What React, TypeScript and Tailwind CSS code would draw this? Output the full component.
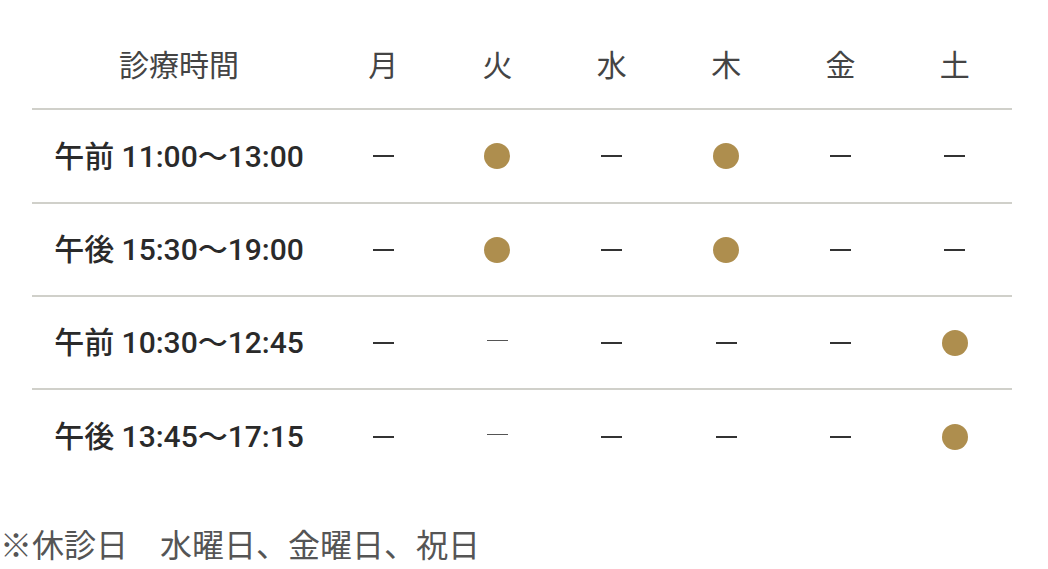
import React from 'react'

type Mark = 'dot' | 'dash' | 'bar'

interface Slot {
  label: string
  days: Mark[]
}

const days = ['月', '火', '水', '木', '金', '土']

// ● = open, — = closed
const slots: Slot[] = [
  { label: '午前 11:00〜13:00', days: ['dash', 'dot', 'dash', 'dot', 'dash', 'dash'] },
  { label: '午後 15:30〜19:00', days: ['dash', 'dot', 'dash', 'dot', 'dash', 'dash'] },
  { label: '午前 10:30〜12:45', days: ['dash', 'bar', 'dash', 'dash', 'dash', 'dot'] },
  { label: '午後 13:45〜17:15', days: ['dash', 'bar', 'dash', 'dash', 'dash', 'dot'] }
]

const Cell: React.FC<{ mark: Mark }> = ({ mark }) => {
  if (mark === 'dot') {
    return <span className="block h-[26px] w-[26px] rounded-full bg-[#ae8e4e]" />
  }
  if (mark === 'bar') {
    return <span className="block h-[1.5px] w-[21px] -translate-y-[2px] bg-[#555]" />
  }
  return <span className="block h-[2px] w-[21px] bg-[#333]" />
}

const App: React.FC = () => {
  return (
    <div
      className="min-h-[569px] bg-white pt-[17px]"
      style={{ fontFamily: 'Roboto, "Noto Sans CJK JP", sans-serif' }}
    >
      <div className="ml-[32px] w-[980px]">
        {/* Header */}
        <div className="grid h-[93px] grid-cols-[294px_repeat(6,1fr)] items-center border-b-2 border-[#d0d0ca] pt-[6px] text-[30px] text-[#444]">
          <div className="text-center">診療時間</div>
          {days.map((d) => (
            <div key={d} className="text-center">{d}</div>
          ))}
        </div>

        {/* Rows */}
        {slots.map((slot, i) => (
          <div
            key={slot.label}
            className={`grid grid-cols-[294px_repeat(6,1fr)] items-center ${
              i === 0 ? 'h-[94px]' : 'h-[93px]'
            } ${i < slots.length - 1 ? 'border-b-2 border-[#d0d0ca]' : ''}`}
          >
            <div className="text-center text-[30px] font-medium text-[#2a2a2a]">{slot.label}</div>
            {slot.days.map((m, j) => (
              <div key={j} className="flex justify-center">
                <Cell mark={m} />
              </div>
            ))}
          </div>
        ))}
      </div>

      <p className="mt-[40px] text-[32px] leading-[46px] text-[#555]">
        ※休診日　水曜日、金曜日、祝日
      </p>
    </div>
  )
}

export default App
